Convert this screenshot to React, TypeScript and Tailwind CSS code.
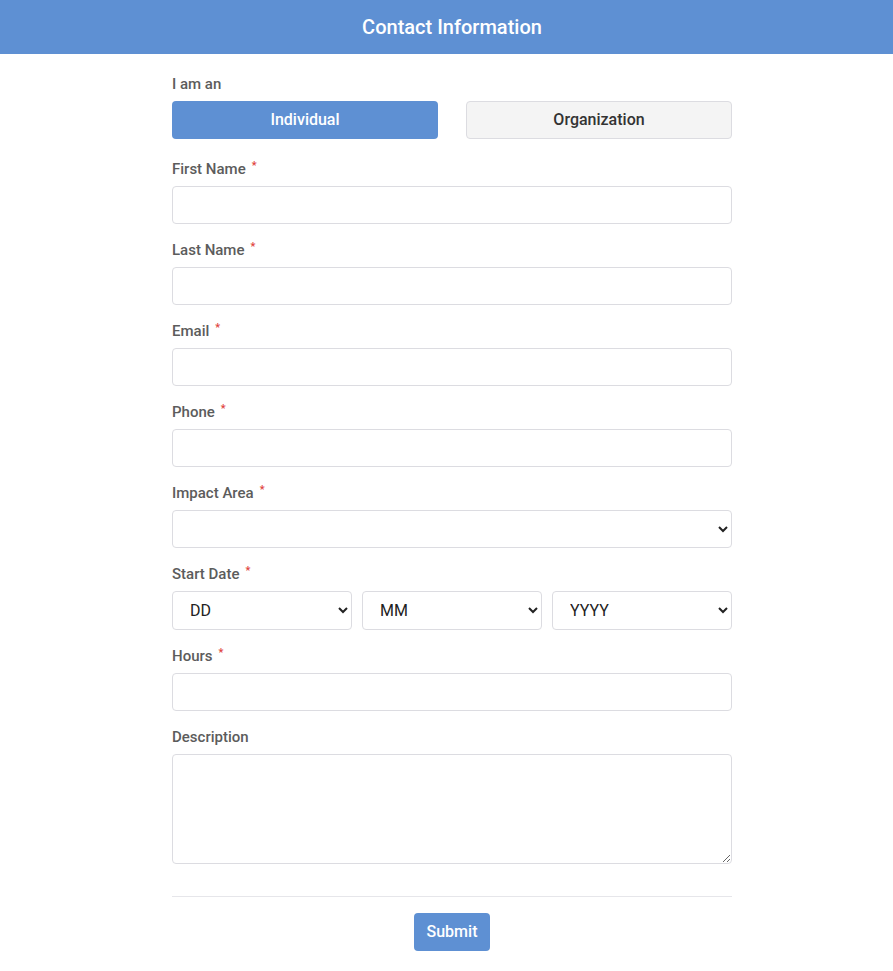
import { useState } from "react";

const fields = [
  { label: "First Name", type: "text" },
  { label: "Last Name", type: "text" },
  { label: "Email", type: "email" },
  { label: "Phone", type: "tel" },
];

function Label({ text, required = true }: { text: string; required?: boolean }) {
  return (
    <label className="mb-[7px] block h-5 text-[15px] font-medium leading-5 text-[#5c5c5c]">
      {text}
      {required && <span className="ml-[6px] align-top text-[11px] leading-[14px] text-[#e0413a]">*</span>}
    </label>
  );
}

const box =
  "block w-full rounded-[4px] border border-[#dcdce1] bg-white px-[13px] text-base text-[#222] outline-none focus:border-[#5d8fd3]";

const toggleOn = "h-[38px] rounded-[4px] bg-[#5e90d3] text-base font-medium text-white";
const toggleOff =
  "h-[38px] rounded-[4px] border border-[#dcdce1] bg-[#f4f4f4] text-base font-medium text-[#333]";

export default function App() {
  const [kind, setKind] = useState<"individual" | "organization">("individual");

  return (
    <div className="min-h-screen bg-white pl-[11px] font-['Roboto',sans-serif]">
      <header className="-ml-[11px] flex h-[54px] items-center justify-center bg-[#5e90d3] pl-[11px]">
        <h1 className="text-xl font-medium text-white">Contact Information</h1>
      </header>

      <form className="mx-auto w-[560px] pt-5" onSubmit={(e) => e.preventDefault()}>
        <Label text="I am an" required={false} />
        <div className="mb-5 grid grid-cols-2 gap-7">
          <button
            type="button"
            onClick={() => setKind("individual")}
            className={kind === "individual" ? toggleOn : toggleOff}
          >
            Individual
          </button>
          <button
            type="button"
            onClick={() => setKind("organization")}
            className={kind === "organization" ? toggleOn : toggleOff}
          >
            Organization
          </button>
        </div>

        {fields.map((f) => (
          <div key={f.label} className="mb-4">
            <Label text={f.label} />
            <input type={f.type} className={`${box} h-[38px]`} />
          </div>
        ))}

        <div className="mb-4">
          <Label text="Impact Area" />
          <select className={`${box} h-[38px]`} defaultValue="">
            <option value="" />
            <option>Education</option>
            <option>Environment</option>
            <option>Health</option>
          </select>
        </div>

        <div className="mb-4">
          <Label text="Start Date" />
          <div className="grid grid-cols-3 gap-2.5">
            <select className={`${box} h-[39px]`} defaultValue="">
              <option value="">DD</option>
            </select>
            <select className={`${box} h-[39px]`} defaultValue="">
              <option value="">MM</option>
            </select>
            <select className={`${box} h-[39px]`} defaultValue="">
              <option value="">YYYY</option>
            </select>
          </div>
        </div>

        <div className="mb-4">
          <Label text="Hours" />
          <input type="number" className={`${box} h-[38px]`} />
        </div>

        <div>
          <Label text="Description" required={false} />
          <textarea className={`${box} h-[110px] py-2`} />
        </div>

        <div className="mt-8 flex justify-center border-t border-[#e6e6ea] pt-4 pb-5">
          <button type="submit" className="h-[38px] rounded-[4px] bg-[#5e90d3] px-[13px] text-base font-medium text-white">
            Submit
          </button>
        </div>
      </form>
    </div>
  );
}
